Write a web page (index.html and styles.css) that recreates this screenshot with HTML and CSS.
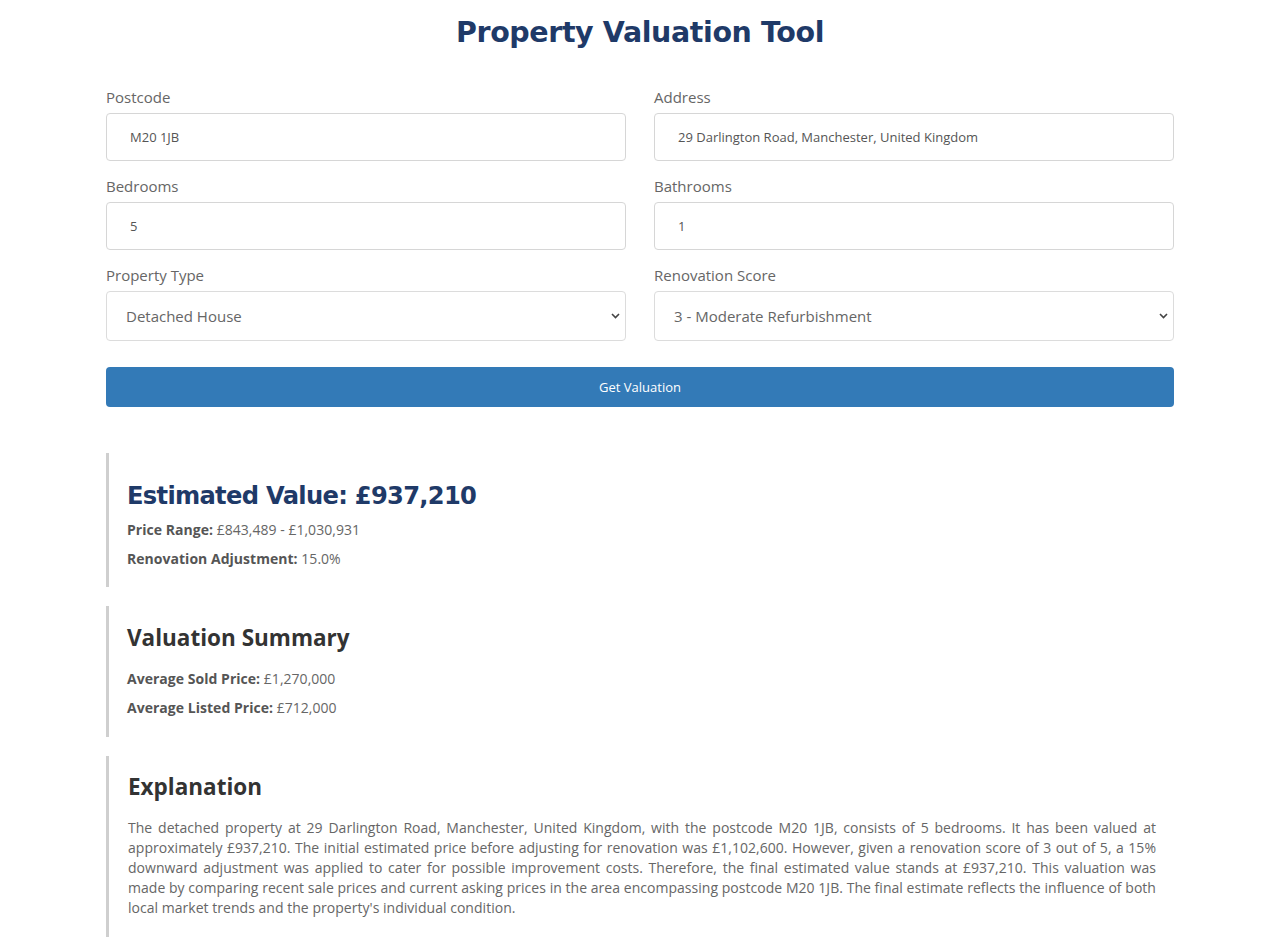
FILE: index.html
```html
<!DOCTYPE html>
<html lang="en">
<head>
<meta charset="utf-8">
<title>Property Valuation Tool</title>
<link rel="stylesheet" href="styles.css">
</head>
<body>
<div class="container">
  <h1 class="title">Property Valuation Tool</h1>
  <form class="form">
    <div class="group">
      <label class="label">Postcode</label>
      <input class="input" type="text" value="M20 1JB">
    </div>
    <div class="group">
      <label class="label">Address</label>
      <input class="input" type="text" value="29 Darlington Road, Manchester, United Kingdom">
    </div>
    <div class="group">
      <label class="label">Bedrooms</label>
      <input class="input" type="text" value="5">
    </div>
    <div class="group">
      <label class="label">Bathrooms</label>
      <input class="input" type="text" value="1">
    </div>
    <div class="group">
      <label class="label">Property Type</label>
      <div class="select-wrap">
        <select class="select"><option>Detached House</option></select>
        <svg class="chev" width="9" height="6" viewBox="0 0 9 6"><path d="M1 1l3.5 3.5L8 1" fill="none" stroke="#444" stroke-width="1.6"/></svg>
      </div>
    </div>
    <div class="group">
      <label class="label">Renovation Score</label>
      <div class="select-wrap">
        <select class="select"><option>3 - Moderate Refurbishment</option></select>
        <svg class="chev" width="9" height="6" viewBox="0 0 9 6"><path d="M1 1l3.5 3.5L8 1" fill="none" stroke="#444" stroke-width="1.6"/></svg>
      </div>
    </div>
    <button class="btn" type="button">Get Valuation</button>
  </form>

  <section class="card card-value">
    <h2 class="value">Estimated Value: £937,210</h2>
    <p class="line"><strong>Price Range:</strong> £843,489 - £1,030,931</p>
    <p class="line"><strong>Renovation Adjustment:</strong> 15.0%</p>
  </section>

  <section class="card card-summary">
    <h3 class="heading">Valuation Summary</h3>
    <p class="line"><strong>Average Sold Price:</strong> £1,270,000</p>
    <p class="line"><strong>Average Listed Price:</strong> £712,000</p>
  </section>

  <section class="card card-expl">
    <h3 class="heading">Explanation</h3>
    <p class="para">The detached property at 29 Darlington Road, Manchester, United Kingdom, with the postcode M20 1JB, consists of 5 bedrooms. It has been valued at approximately £937,210. The initial estimated price before adjusting for renovation was £1,102,600. However, given a renovation score of 3 out of 5, a 15% downward adjustment was applied to cater for possible improvement costs. Therefore, the final estimated value stands at £937,210. This valuation was made by comparing recent sale prices and current asking prices in the area encompassing postcode M20 1JB. The final estimate reflects the influence of both local market trends and the property's individual condition.</p>
  </section>
</div>
</body>
</html>
```

FILE: styles.css
```css
* { box-sizing: border-box; }
html, body { margin: 0; padding: 0; background: #fff; }
body {
  font-family: "Open Sans", "Liberation Sans", sans-serif;
  color: #666;
}
.container {
  width: 1068px;
  margin: 0 auto;
  padding-top: 15px;
}
.title {
  margin: 0;
  text-align: center;
  font-family: "DejaVu Sans", "Liberation Sans", sans-serif;
  font-weight: bold;
  font-size: 28.5px;
  line-height: 36px;
  color: #1f3a68;
  letter-spacing: -0.4px;
}
.form {
  margin-top: 35px;
  display: grid;
  grid-template-columns: 1fr 1fr;
  column-gap: 28px;
  row-gap: 14px;
}
.group {
  display: flex;
  flex-direction: column;
  gap: 5px;
}
.label {
  font-size: 15px;
  line-height: 22px;
  color: #666;
}
.input {
  height: 48px;
  border: 1px solid #d6d6d6;
  border-radius: 4px;
  padding: 0 23px;
  font-family: "Open Sans", sans-serif;
  font-size: 13px;
  color: #555;
  background: #fff;
  outline: none;
}
.select-wrap { position: relative; }
.select {
  width: 100%;
  height: 50px;
  -webkit-appearance: none;
  appearance: none;
  border: 1px solid #dcdcdc;
  border-radius: 4px;
  padding: 0 19px;
  font-family: "Open Sans", sans-serif;
  font-size: 15px;
  color: #666;
  background: #fff;
}
.chev {
  position: absolute;
  right: 6px;
  top: 22px;
}
.btn {
  grid-column: 1 / -1;
  margin-top: 12px;
  height: 40px;
  border: none;
  border-radius: 4px;
  background: #337ab7;
  color: #fff;
  font-family: "Open Sans", sans-serif;
  font-size: 13px;
}
.card {
  border-left: 3px solid #cfcfcf;
  padding: 0 18px 0 18px;
}
.card-value {
  margin-top: 46px;
  padding-top: 27px;
  padding-bottom: 18px;
}
.card-summary {
  margin-top: 19px;
  padding-top: 17px;
  padding-bottom: 19px;
}
.card-expl {
  margin-top: 19px;
  padding-top: 16px;
  padding-bottom: 19px;
  padding-left: 19px;
}
.value {
  margin: 0 0 8px;
  font-family: "DejaVu Sans", "Liberation Sans", sans-serif;
  font-weight: bold;
  font-size: 24.2px;
  line-height: 32px;
  color: #1f3a68;
  letter-spacing: -0.7px;
}
.heading {
  margin: 0 0 16px;
  font-family: "Open Sans", sans-serif;
  font-weight: 700;
  font-size: 22.5px;
  line-height: 30px;
  color: #333;
}
.line {
  margin: 0 0 9px;
  font-size: 14px;
  line-height: 20px;
  color: #666;
  letter-spacing: 0.03px;
}
.line:last-child { margin-bottom: 0; }
.line strong { color: #555; font-weight: 700; }
.para {
  margin: 0;
  font-size: 14px;
  line-height: 20px;
  color: #666;
  text-align: justify;
  letter-spacing: 0.03px;
}
```
